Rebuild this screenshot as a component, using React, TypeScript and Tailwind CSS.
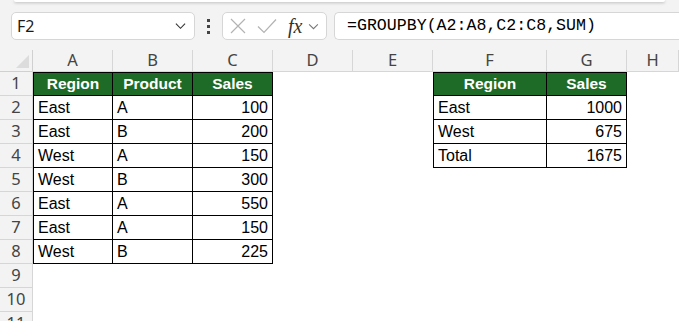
import { FC } from 'react';

const cols = ['A', 'B', 'C', 'D', 'E', 'F', 'G', 'H'];

type Cell = { text?: string; align?: 'left' | 'right' | 'center'; head?: boolean; box?: boolean; top?: boolean; left?: boolean };

// rows 1..11, columns A..H
const sheet: Cell[][] = (() => {
  const rows: Cell[][] = Array.from({ length: 11 }, () => cols.map(() => ({} as Cell)));
  const t1 = [
    ['Region', 'Product', 'Sales'],
    ['East', 'A', '100'],
    ['East', 'B', '200'],
    ['West', 'A', '150'],
    ['West', 'B', '300'],
    ['East', 'A', '550'],
    ['East', 'A', '150'],
    ['West', 'B', '225']
  ];
  t1.forEach((r, i) =>
    r.forEach((v, j) => {
      rows[i][j] = { text: v, head: i === 0, box: true, top: i === 0, left: j === 0, align: i === 0 ? 'center' : j === 2 ? 'right' : 'left' };
    })
  );
  const t2 = [
    ['Region', 'Sales'],
    ['East', '1000'],
    ['West', '675'],
    ['Total', '1675']
  ];
  t2.forEach((r, i) =>
    r.forEach((v, j) => {
      rows[i][5 + j] = { text: v, head: i === 0, box: true, top: i === 0, left: j === 0, align: i === 0 ? 'center' : j === 1 ? 'right' : 'left' };
    })
  );
  return rows;
})();

const SheetCell: FC<{ c: Cell }> = ({ c }) => {
  const cls = [
    'h-[24px] flex items-end pb-[3px] px-[4px] leading-[17px] whitespace-nowrap',
    c.box ? 'border-r border-b border-black' : '',
    c.top ? 'border-t' : '',
    c.left ? 'border-l' : '',
    c.head ? 'bg-[#1d6b27] text-white font-bold text-[15.5px]' : 'text-black text-[16px]',
    c.align === 'right' ? 'justify-end' : c.align === 'center' ? 'justify-center' : 'justify-start'
  ].join(' ');
  return <div className={cls}>{c.text}</div>;
};

const Chevron: FC<{ className?: string }> = ({ className }) => (
  <svg viewBox="0 0 12 8" className={className} fill="none" stroke="currentColor" strokeWidth="1.2">
    <path d="M1 1.5 L6 6.5 L11 1.5" />
  </svg>
);

const App: FC = () => {
  return (
    <div className="w-[679px] h-[321px] overflow-hidden bg-[#f3f3f3] font-['Liberation_Sans',Arial,sans-serif]">
      {/* ribbon edge */}
      <div className="mx-[14px] h-[2px] bg-white rounded-b-[6px] shadow-[0_1px_3px_rgba(0,0,0,0.25)]" />

      {/* formula bar */}
      <div className="mt-[10px] h-[28px] flex items-stretch">
        <div className="ml-[11px] w-[184px] bg-white border border-[#d6d6d6] rounded-[5px] flex items-center pl-[5px] pr-[8px]">
          <span className="text-[16px] text-[#1a1a1a] font-['Noto_Sans',sans-serif] leading-none">F2</span>
          <Chevron className="ml-auto w-[11px] h-[8px] text-[#333]" />
        </div>
        <div className="w-[27px] flex flex-col items-center justify-center gap-[3px]">
          <span className="w-[3px] h-[3px] bg-[#444]" />
          <span className="w-[3px] h-[3px] bg-[#444]" />
          <span className="w-[3px] h-[3px] bg-[#444]" />
        </div>
        <div className="w-[105px] bg-white border border-[#d6d6d6] rounded-[5px] flex items-center pl-[7px]">
          <svg viewBox="0 0 16 16" className="w-[16px] h-[16px] text-[#b3b3b3]" fill="none" stroke="currentColor" strokeWidth="1.2">
            <path d="M1 1 L15 15 M15 1 L1 15" />
          </svg>
          <svg viewBox="0 0 20 16" className="ml-[11px] w-[20px] h-[16px] text-[#b3b3b3]" fill="none" stroke="currentColor" strokeWidth="1.2">
            <path d="M1 8.5 L7 14.5 L19 1.5" />
          </svg>
          <span className="ml-[11px] text-[20px] italic text-[#333] font-['Liberation_Serif',serif] leading-none">fx</span>
          <Chevron className="ml-[6px] w-[11px] h-[7px] text-[#777]" />
        </div>
        <div className="ml-[7px] flex-1 bg-white border-y border-l border-[#d6d6d6] rounded-l-[5px] flex items-center pl-[12px]">
          <span className="text-[16.6px] text-black font-['Liberation_Mono',monospace] leading-none">
            =GROUPBY(A2:A8,C2:C8,SUM)
          </span>
        </div>
      </div>

      {/* grid */}
      <div className="mt-[10px] grid grid-cols-[33px_80px_80px_80px_80px_80px_114px_80px_1fr] grid-rows-[22px] auto-rows-[24px]">
        <div className="relative bg-[#f3f3f3] border-r border-b border-[#d0d0d0]">
          <div className="absolute right-[3px] bottom-[3px] w-0 h-0 border-l-[13px] border-l-transparent border-b-[13px] border-b-[#dcdcdc]" />
        </div>
        {cols.map((c) => (
          <div
            key={c}
            className="bg-[#f3f3f3] border-r border-b border-[#d6d6d6] flex items-center justify-center text-[16.5px] text-[#444] font-['Noto_Sans',sans-serif]"
          >
            {c}
          </div>
        ))}
        {sheet.map((row, i) => (
          <RowView key={i} n={i + 1} row={row} />
        ))}
      </div>
    </div>
  );
};

const RowView: FC<{ n: number; row: Cell[] }> = ({ n, row }) => (
  <>
    <div className="bg-[#f3f3f3] border-r border-b border-[#d6d6d6] flex items-center justify-center text-[16.5px] text-[#444] font-['Noto_Sans',sans-serif]">
      {n}
    </div>
    {row.map((c, j) => (
      <div key={j} className="bg-white">
        <SheetCell c={c} />
      </div>
    ))}
  </>
);

export default App;
